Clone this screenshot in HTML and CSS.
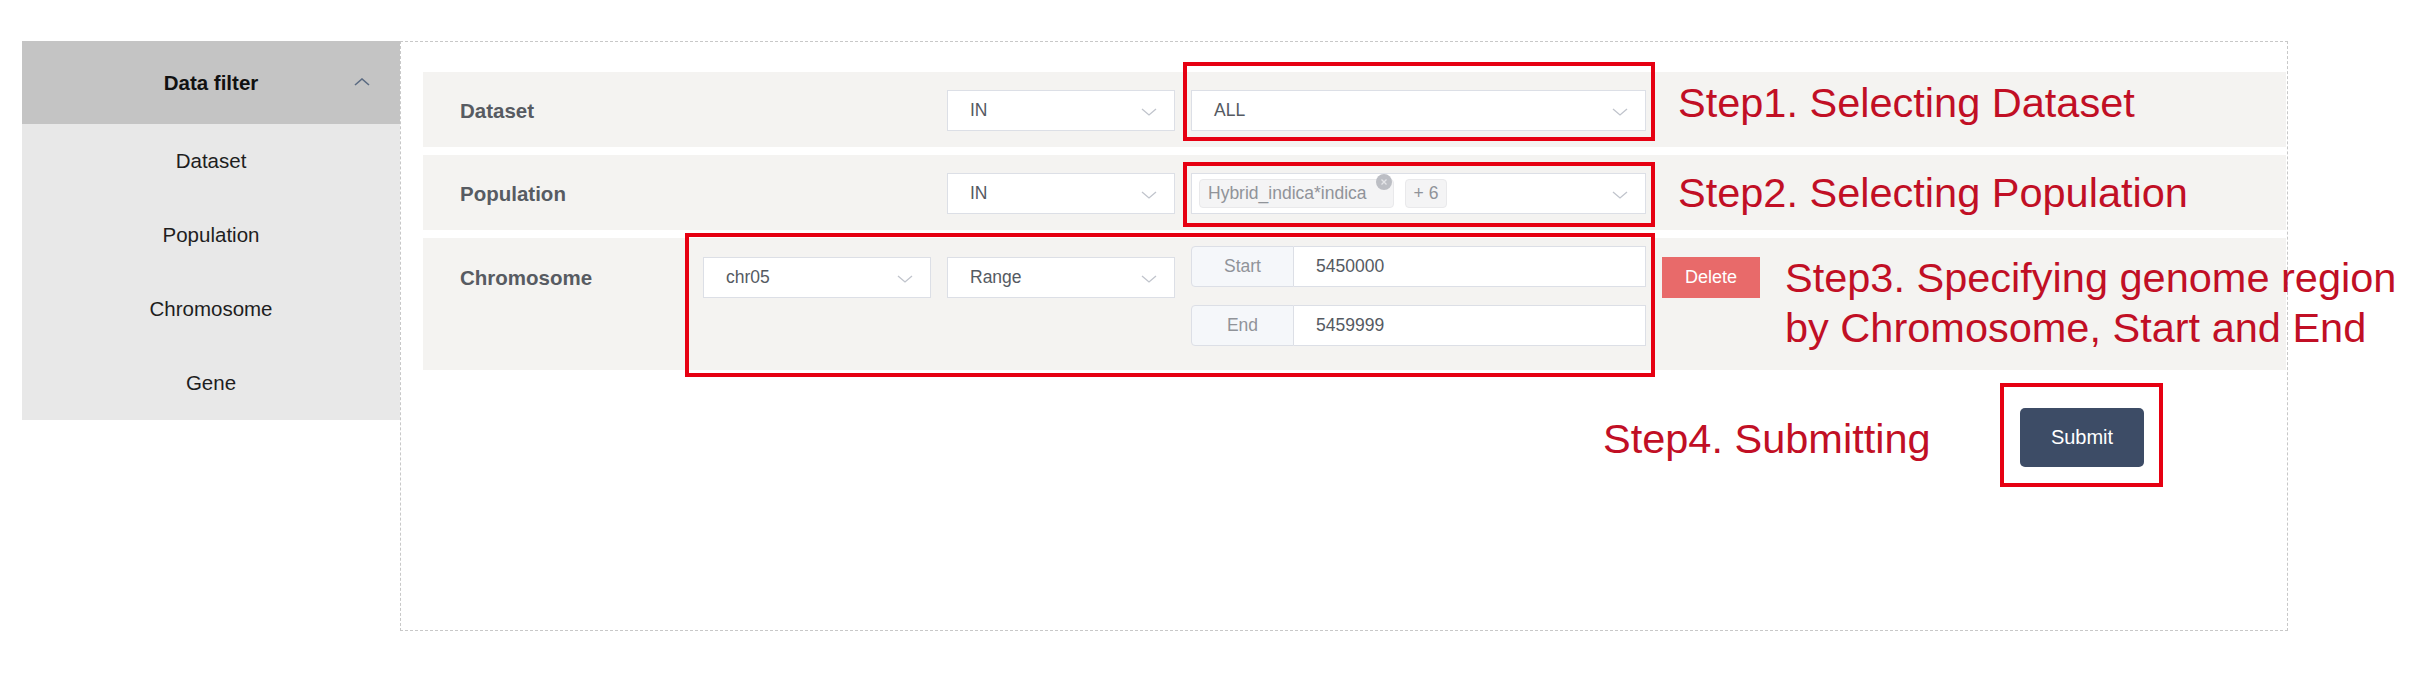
FILE: index.html
```html
<!DOCTYPE html>
<html lang="en">
<head>
<meta charset="utf-8">
<title>Data filter</title>
<link rel="stylesheet" href="styles.css">
</head>
<body>
<div class="page">
  <aside class="sidebar">
    <div class="sb-head">
      <span>Data filter</span>
      <svg class="caret-up" viewBox="0 0 16 8" width="16" height="8"><polyline points="1,7 8,1 15,7" fill="none" stroke="#5b6b82" stroke-width="1.6"/></svg>
    </div>
    <ul class="sb-list">
      <li>Dataset</li>
      <li>Population</li>
      <li>Chromosome</li>
      <li>Gene</li>
    </ul>
  </aside>

  <main class="panel">
    <div class="rows">
      <div class="row row-single">
        <div class="label">Dataset</div>
        <div class="empty"></div>
        <div class="select"><span>IN</span><svg class="chev" viewBox="0 0 16 8" width="16" height="8"><polyline points="1,1 8,7 15,1" fill="none" stroke="#c0c4cc" stroke-width="1.3"/></svg></div>
        <div class="select"><span>ALL</span><svg class="chev" viewBox="0 0 16 8" width="16" height="8"><polyline points="1,1 8,7 15,1" fill="none" stroke="#c0c4cc" stroke-width="1.3"/></svg></div>
      </div>

      <div class="row row-single">
        <div class="label">Population</div>
        <div class="empty"></div>
        <div class="select"><span>IN</span><svg class="chev" viewBox="0 0 16 8" width="16" height="8"><polyline points="1,1 8,7 15,1" fill="none" stroke="#c0c4cc" stroke-width="1.3"/></svg></div>
        <div class="select select-tags">
          <div class="tags">
            <span class="tag tag-main">Hybrid_indica*indica<span class="tag-close"><svg viewBox="0 0 16 16" width="16" height="16"><path d="M5.5 5.5 L10.5 10.5 M10.5 5.5 L5.5 10.5" stroke="#e4e5e8" stroke-width="1.3"/></svg></span></span>
            <span class="tag tag-more">+ 6</span>
          </div>
          <svg class="chev" viewBox="0 0 16 8" width="16" height="8"><polyline points="1,1 8,7 15,1" fill="none" stroke="#c0c4cc" stroke-width="1.3"/></svg>
        </div>
      </div>

      <div class="row row-range">
        <div class="label">Chromosome</div>
        <div class="select"><span>chr05</span><svg class="chev" viewBox="0 0 16 8" width="16" height="8"><polyline points="1,1 8,7 15,1" fill="none" stroke="#c0c4cc" stroke-width="1.3"/></svg></div>
        <div class="select"><span>Range</span><svg class="chev" viewBox="0 0 16 8" width="16" height="8"><polyline points="1,1 8,7 15,1" fill="none" stroke="#c0c4cc" stroke-width="1.3"/></svg></div>
        <div class="bounds">
          <div class="igroup"><span class="addon">Start</span><span class="ivalue">5450000</span></div>
          <div class="igroup"><span class="addon">End</span><span class="ivalue">5459999</span></div>
        </div>
        <button class="btn-delete">Delete</button>
      </div>
    </div>

    <div class="actions">
      <button class="btn-submit">Submit</button>
    </div>
  </main>

  <div class="mark mark-1"></div>
  <div class="mark mark-2"></div>
  <div class="mark mark-3"></div>
  <div class="mark mark-4"></div>

  <div class="note note-1">Step1. Selecting Dataset</div>
  <div class="note note-2">Step2. Selecting Population</div>
  <div class="note note-3">Step3. Specifying genome region<br>by Chromosome, Start and End</div>
  <div class="note note-4">Step4. Submitting</div>
</div>
</body>
</html>
```

FILE: styles.css
```css
* {
  box-sizing: border-box;
}

html, body {
  margin: 0;
  padding: 0;
  background: #ffffff;
  overflow: hidden;
}

body {
  font-family: "Liberation Sans", Arial, sans-serif;
  width: 2410px;
  height: 676px;
}

.page {
  position: relative;
  display: flex;
  align-items: flex-start;
  padding: 41px 0 0 22px;
  height: 676px;
}

/* Sidebar */
.sidebar {
  width: 378px;
  flex: none;
  background: #e8e8e8;
}

.sb-head {
  position: relative;
  height: 83px;
  background: #c4c4c4;
  display: flex;
  align-items: center;
  justify-content: center;
  font-size: 20.5px;
  font-weight: bold;
  color: #111111;
}

.caret-up {
  position: absolute;
  left: 332px;
  top: 37px;
}

.sb-list {
  list-style: none;
  margin: 0;
  padding: 0;
}

.sb-list li {
  height: 74px;
  display: flex;
  align-items: center;
  justify-content: center;
  font-size: 20.5px;
  color: #1e1e1e;
}

/* Main panel */
.panel {
  width: 1888px;
  height: 590px;
  flex: none;
  border: 1px dashed #c8c8c8;
  padding: 30px 1px 0 22px;
  background: #ffffff;
}

.rows {
  display: flex;
  flex-direction: column;
  gap: 8px;
}

.row {
  display: grid;
  grid-template-columns: 264px 228px 228px 455px 98px;
  column-gap: 16px;
  background: #f4f3f1;
}

.row-single {
  padding: 18px 0 16px;
  align-items: center;
}

.row-range {
  padding: 8px 0 24px;
  align-items: start;
}

.label {
  padding-left: 37px;
  font-size: 20.5px;
  font-weight: bold;
  color: #575b62;
  height: 41px;
  line-height: 41px;
}

.row-range .label,
.row-range .select,
.row-range .btn-delete {
  margin-top: 11px;
}

.select {
  height: 41px;
  background: #ffffff;
  border: 1px solid #dcdfe6;
  display: flex;
  align-items: center;
  justify-content: space-between;
  padding: 0 17px 0 22px;
  font-size: 17.5px;
  color: #555a62;
}

.chev {
  flex: none;
  margin-top: 3px;
}

.select-tags {
  padding-left: 7px;
}

.tags {
  display: flex;
  align-items: center;
  gap: 11px;
}

.tag {
  position: relative;
  height: 29px;
  display: inline-flex;
  align-items: center;
  background: #f4f4f5;
  border: 1px solid #e9e9eb;
  border-radius: 4px;
  color: #909399;
  font-size: 17.5px;
}

.tag-main {
  width: 195px;
  padding-left: 8px;
}

.tag-more {
  width: 42px;
  justify-content: center;
}

.tag-close {
  position: absolute;
  right: 1px;
  top: -6px;
  width: 16px;
  height: 16px;
  border-radius: 50%;
  background: #bcbec4;
  display: flex;
}

.bounds {
  display: flex;
  flex-direction: column;
  gap: 18px;
}

.igroup {
  display: flex;
  height: 41px;
  font-size: 17.5px;
}

.addon {
  width: 103px;
  flex: none;
  background: #f5f7fa;
  border: 1px solid #dcdfe6;
  border-radius: 4px 0 0 4px;
  color: #909399;
  display: flex;
  align-items: center;
  justify-content: center;
}

.ivalue {
  flex: 1;
  background: #ffffff;
  border: 1px solid #dcdfe6;
  border-left: none;
  display: flex;
  align-items: center;
  padding-left: 22px;
  color: #555a62;
}

.btn-delete {
  width: 98px;
  height: 41px;
  border: none;
  background: #e86a6a;
  color: #ffffff;
  font-family: "Liberation Sans", Arial, sans-serif;
  font-size: 18px;
  padding: 0;
}

.actions {
  display: flex;
  justify-content: flex-end;
  padding-right: 142px;
  margin-top: 38px;
}

.btn-submit {
  width: 124px;
  height: 59px;
  border: none;
  border-radius: 5px;
  background: #3d4c66;
  color: #ffffff;
  font-family: "Liberation Sans", Arial, sans-serif;
  font-size: 20px;
  padding: 0;
}

/* Annotations overlaid on the screenshot */
.mark {
  position: absolute;
  border: 4px solid #e60012;
}

.mark-1 { left: 1183px; top: 62px;  width: 472px; height: 79px; }
.mark-2 { left: 1183px; top: 162px; width: 472px; height: 65px; }
.mark-3 { left: 685px;  top: 233px; width: 970px; height: 144px; }
.mark-4 { left: 2000px; top: 383px; width: 163px; height: 104px; }

.note {
  position: absolute;
  font-size: 41.5px;
  line-height: 50px;
  color: #c10f25;
  white-space: nowrap;
}

.note-1 { left: 1678px; top: 78px; }
.note-2 { left: 1678px; top: 168px; }
.note-3 { left: 1785px; top: 253px; }
.note-4 { left: 1603px; top: 414px; }
```
